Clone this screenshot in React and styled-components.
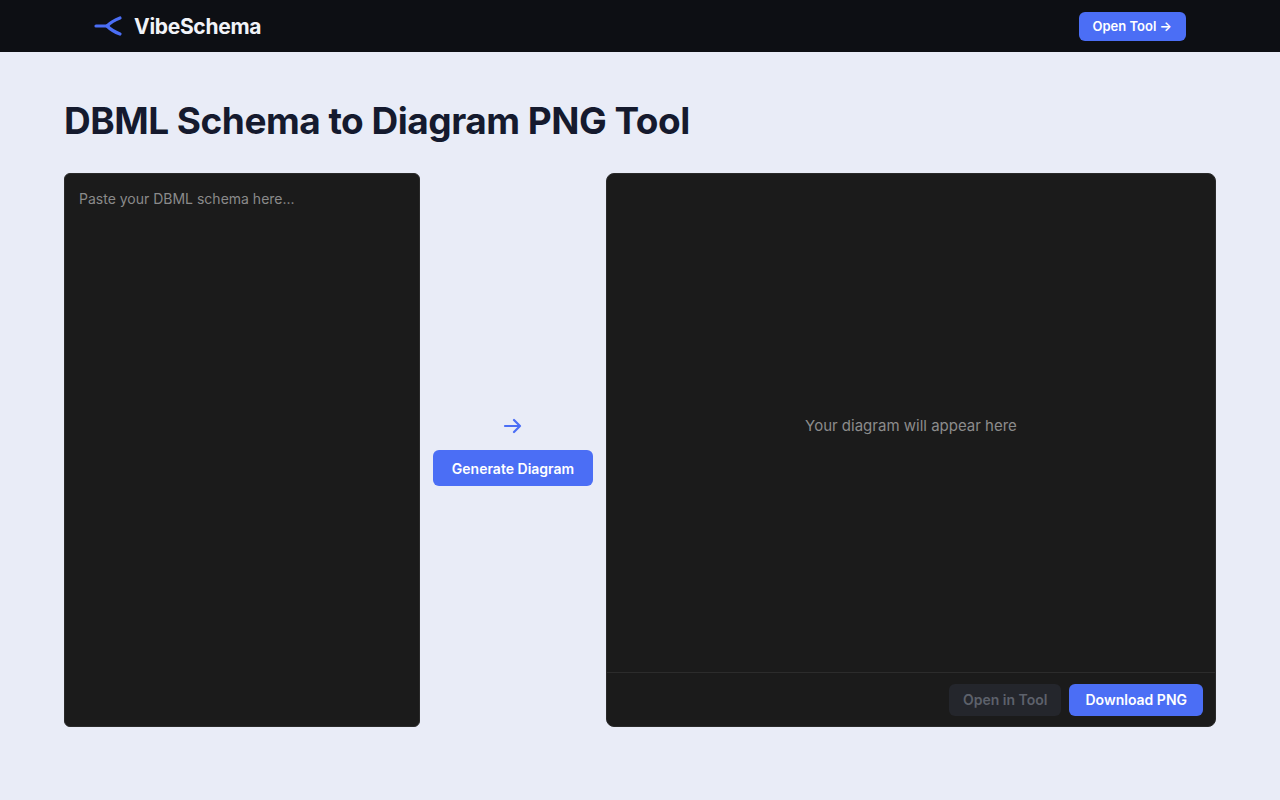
import React from "react";
import styled, { createGlobalStyle } from "styled-components";

const G = createGlobalStyle`
  body { margin:0; background:#e9ecf7; font-family: Inter, "Open Sans", sans-serif; }
  * { box-sizing:border-box; }
`;
const Header = styled.header`
  height:52px; background:#0d0f14; display:flex; align-items:center; justify-content:space-between; padding:0 94px 0 94px;
`;
const Brand = styled.div`display:flex; align-items:center; gap:10px; color:#f1f3f8; font-weight:700; font-size:21px; letter-spacing:-0.3px;`;
const Btn = styled.button`
  border:none; border-radius:6px; font-family:inherit; font-weight:600; cursor:pointer;
  background:${p => p.$ghost ? "#24262c" : "#4b6ef5"}; color:${p => p.$ghost ? "#5d616b" : "#fff"};
  font-size:${p => p.$small ? "13px" : "14px"}; height:${p => p.$h || 32}px; padding:0 ${p => p.$px || 14}px;
`;
const Main = styled.main`padding:46px 64px;`;
const Title = styled.h1`margin:0 0 30px; font-size:37px; font-weight:700; color:#151a2e; letter-spacing:-0.5px;`;
const Row = styled.div`display:flex; height:554px;`;
const Input = styled.textarea`
  width:356px; background:#1b1b1b; border:1px solid #2a2a2a; border-radius:6px; padding:16px 14px; resize:none;
  font-family:inherit; font-size:14px; color:#ddd; outline:none;
  &::placeholder{ color:#8a8a8a; }
`;
const Mid = styled.div`width:186px; display:flex; flex-direction:column; align-items:center; justify-content:center; gap:12px;`;
const Out = styled.div`flex:1; background:#1b1b1b; border:1px solid #2a2a2a; border-radius:8px; display:flex; flex-direction:column; overflow:hidden;`;
const Canvas = styled.div`flex:1; display:flex; align-items:center; justify-content:center; color:#8c8c8c; font-size:15px; padding-top:4px;`;
const Foot = styled.div`height:54px; border-top:1px solid #2c2c2c; display:flex; align-items:center; justify-content:flex-end; gap:8px; padding:0 12px;`;

export default function App() {
  return (
    <>
      <G />
      <Header>
        <Brand>
          <svg width="30" height="22" viewBox="0 0 30 22" fill="none" stroke="#4b6ef5" strokeWidth="3.2" strokeLinecap="round">
            <path d="M2 11 H14" />
            <path d="M26 3 Q18 6 13 11 Q18 16 26 19" />
          </svg>
          VibeSchema
        </Brand>
        <Btn $small $h={29} $px={14}>Open Tool →</Btn>
      </Header>
      <Main>
        <Title>DBML Schema to Diagram PNG Tool</Title>
        <Row>
          <Input placeholder="Paste your DBML schema here..." />
          <Mid>
            <svg width="24" height="24" viewBox="0 0 24 24" fill="none" stroke="#4b6ef5" strokeWidth="2.2" strokeLinecap="round" strokeLinejoin="round">
              <path d="M4 12h15M13 6l6 6-6 6" />
            </svg>
            <Btn $h={36} $px={19}>Generate Diagram</Btn>
          </Mid>
          <Out>
            <Canvas>Your diagram will appear here</Canvas>
            <Foot>
              <Btn $ghost>Open in Tool</Btn>
              <Btn $px={16}>Download PNG</Btn>
            </Foot>
          </Out>
        </Row>
      </Main>
    </>
  );
}
